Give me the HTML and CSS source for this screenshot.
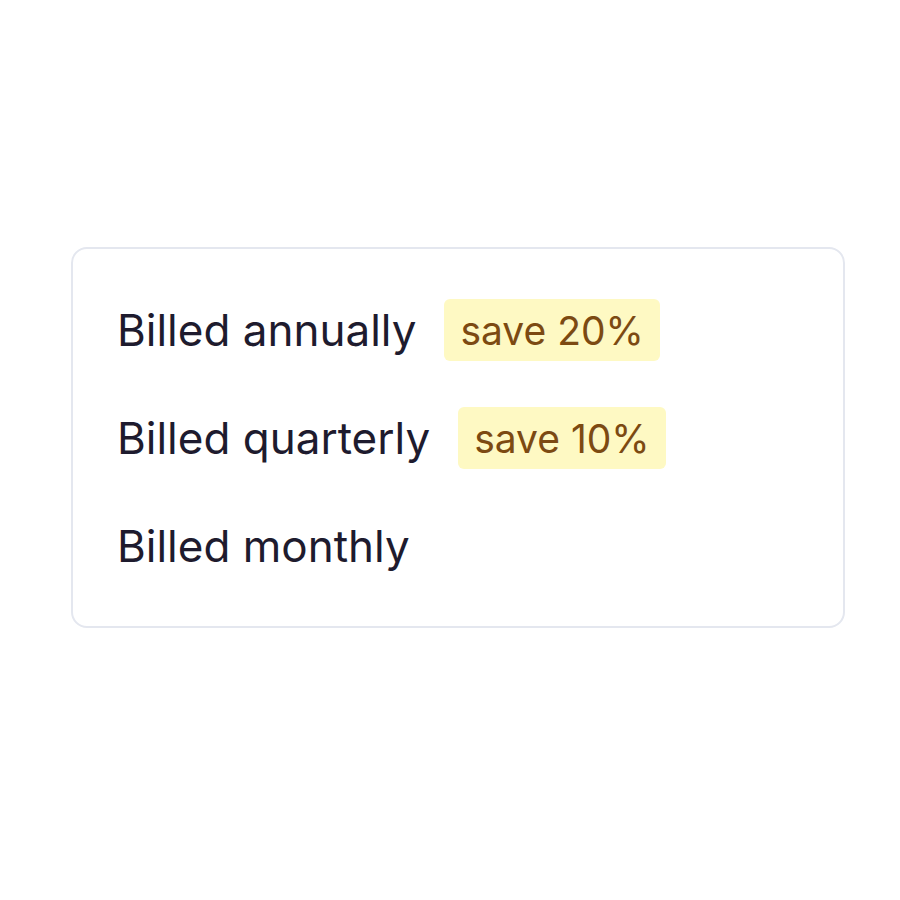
FILE: index.html
```html
<!DOCTYPE html>
<html lang="en">
<head>
    <meta charset="UTF-8">
    <meta name="viewport" content="width=device-width, initial-scale=1.0">
    <title>Billing period</title>
    <link rel="stylesheet" href="styles.css">
</head>
<body>
    <div class="card">
        <div class="option">
            <span class="label">Billed annually</span>
            <span class="badge">save 20%</span>
        </div>
        <div class="option">
            <span class="label">Billed quarterly</span>
            <span class="badge">save 10%</span>
        </div>
        <div class="option">
            <span class="label">Billed monthly</span>
        </div>
    </div>
</body>
</html>
```

FILE: styles.css
```css
body {
    margin: 0;
    padding: 247px 0 0 71px;
    background-color: #ffffff;
    font-family: Inter, 'Liberation Sans', sans-serif;
}

.card {
    width: 774px;
    box-sizing: border-box;
    border: 2px solid #e4e7ef;
    border-radius: 16px;
    padding: 50px 44px 49px;
    display: flex;
    flex-direction: column;
    gap: 46px;
}

.option {
    display: flex;
    align-items: center;
    gap: 28px;
    height: 62px;
}

.label {
    font-size: 44px;
    color: #1e1b2e;
}

.badge {
    display: flex;
    align-items: center;
    height: 62px;
    padding: 0 16px;
    box-sizing: border-box;
    background-color: #fef9c3;
    color: #7c4a12;
    font-size: 39px;
    border-radius: 6px;
}
```
